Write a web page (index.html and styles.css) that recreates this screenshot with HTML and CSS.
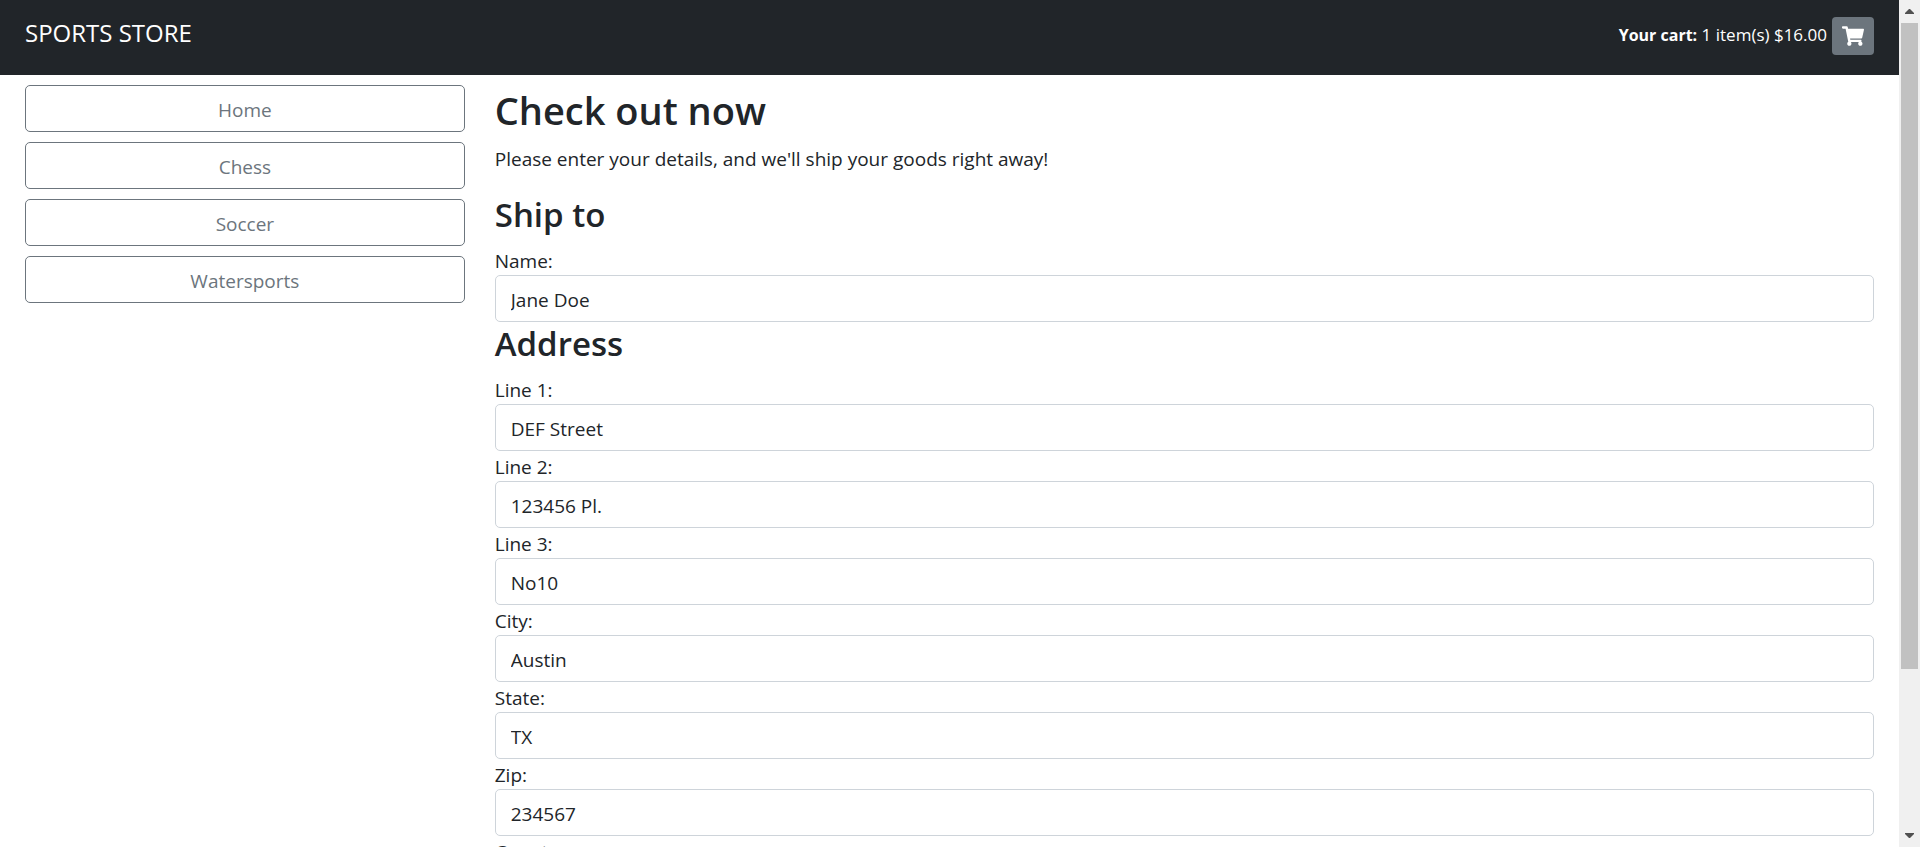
FILE: index.html
```html
<!DOCTYPE html>
<html lang="en">
<head>
<meta charset="utf-8">
<title>Sports Store</title>
<link rel="stylesheet" href="styles.css">
</head>
<body>
<div class="window">
  <div class="page">
    <header class="topbar">
      <a class="brand" href="#">SPORTS STORE</a>
      <div class="cart">
        <span class="cart-summary"><b class="cart-label">Your cart:</b> 1 item(s) $16.00</span>
        <a class="cart-button" href="#" aria-label="View cart">
          <svg class="cart-icon" viewBox="0 0 576 512" aria-hidden="true"><path fill="currentColor" d="M528.12 301.319l47.273-208C578.806 78.301 567.391 64 551.99 64H159.208l-9.166-44.81C147.758 8.021 137.93 0 126.529 0H24C10.745 0 0 10.745 0 24v16c0 13.255 10.745 24 24 24h69.883l70.248 343.435C147.325 417.1 136 435.222 136 456c0 30.928 25.072 56 56 56s56-25.072 56-56c0-15.674-6.447-29.835-16.824-40h209.647C430.447 426.165 424 440.326 424 456c0 30.928 25.072 56 56 56s56-25.072 56-56c0-22.172-12.888-41.332-31.579-50.405l5.517-24.276c3.413-15.018-8.002-29.319-23.403-29.319H218.117l-6.545-32h293.145c11.206 0 20.92-7.754 23.403-18.681z"/></svg>
        </a>
      </div>
    </header>
    <div class="layout">
      <nav class="categories">
        <a class="category" href="#">Home</a>
        <a class="category" href="#">Chess</a>
        <a class="category" href="#">Soccer</a>
        <a class="category" href="#">Watersports</a>
      </nav>
      <main class="content">
        <h1 class="title">Check out now</h1>
        <p class="intro">Please enter your details, and we'll ship your goods right away!</p>
        <form class="form">
          <h2 class="section">Ship to</h2>
          <div class="field"><label for="name">Name:</label><input id="name" type="text" value="Jane Doe"></div>
          <h2 class="section">Address</h2>
          <div class="field"><label for="line1">Line 1:</label><input id="line1" type="text" value="DEF Street"></div>
          <div class="field"><label for="line2">Line 2:</label><input id="line2" type="text" value="123456 Pl."></div>
          <div class="field"><label for="line3">Line 3:</label><input id="line3" type="text" value="No10"></div>
          <div class="field"><label for="city">City:</label><input id="city" type="text" value="Austin"></div>
          <div class="field"><label for="state">State:</label><input id="state" type="text" value="TX"></div>
          <div class="field"><label for="zip">Zip:</label><input id="zip" type="text" value="234567"></div>
          <div class="field"><label for="country">Country:</label><input id="country" type="text"></div>
        </form>
      </main>
    </div>
  </div>
  <div class="scrollbar" aria-hidden="true">
    <svg class="arrow" viewBox="0 0 21 23"><path fill="#505050" d="M6 14v-1l4-4h1l4 4v1z"/></svg>
    <div class="thumb"></div>
    <div class="track"></div>
    <svg class="arrow" viewBox="0 0 21 23"><path fill="#505050" d="M6 9v1l4 4h1l4-4v-1z"/></svg>
  </div>
</div>
</body>
</html>
```
FILE: styles.css
```css
* {
  box-sizing: border-box;
}

body {
  margin: 0;
  background: #fff;
  color: #212529;
  font-family: "Open Sans", "Noto Sans", sans-serif;
  font-size: 19px;
  line-height: 28px;
}

.window {
  display: grid;
  grid-template-columns: minmax(0, 1fr) 21px;
  height: 100vh;
}

.page {
  overflow-y: auto;
  scrollbar-width: none;
}

.topbar {
  display: flex;
  justify-content: space-between;
  align-items: flex-start;
  padding: 17px 25px 20px;
  background: #212529;
  color: #fff;
}

.brand {
  color: inherit;
  font-size: 24px;
  line-height: 32px;
  text-decoration: none;
}

.cart {
  display: flex;
  align-items: center;
  gap: 5px;
}

.cart-summary {
  padding-bottom: 2px;
  font-size: 17px;
}

.cart-label {
  font-size: 16px;
}

.cart-button {
  display: flex;
  padding: 9px 10px;
  border-radius: 4px;
  background: #6c757d;
  color: #fff;
}

.cart-icon {
  width: 22px;
  height: 20px;
}

.layout {
  display: grid;
  grid-template-columns: repeat(12, minmax(0, 1fr));
  column-gap: 30px;
  padding: 10px 25px;
}

.categories {
  grid-column: span 3;
  display: flex;
  flex-direction: column;
  gap: 10px;
}

.category {
  padding: 10px 15px 7px;
  border: 1px solid #6c757d;
  border-radius: 5px;
  color: #6c757d;
  text-align: center;
  text-decoration: none;
}

.content {
  grid-column: span 9;
}

.title {
  margin: 0 0 10px;
  padding-top: 2px;
  font-size: 38px;
  font-weight: 600;
  line-height: 46px;
}

.intro {
  margin: 0 0 20px;
  padding-top: 2px;
}

.section {
  margin: 0 0 10px;
  padding-top: 2px;
  font-size: 33px;
  font-weight: 600;
  line-height: 40px;
}

.field {
  display: flex;
  flex-direction: column;
}

.field label {
  padding-top: 2px;
}

.field input {
  height: 47px;
  padding: 10px 15px 7px;
  border: 1px solid #ced4da;
  border-radius: 5px;
  background: #fff;
  color: inherit;
  font: inherit;
}

.scrollbar {
  display: flex;
  flex-direction: column;
  background: #f0f0f0;
}

.arrow {
  flex: none;
  width: 21px;
  height: 23px;
}

.thumb {
  flex: 25;
  margin: 0 2px;
  background: #c1c1c1;
}

.track {
  flex: 6;
}
```
